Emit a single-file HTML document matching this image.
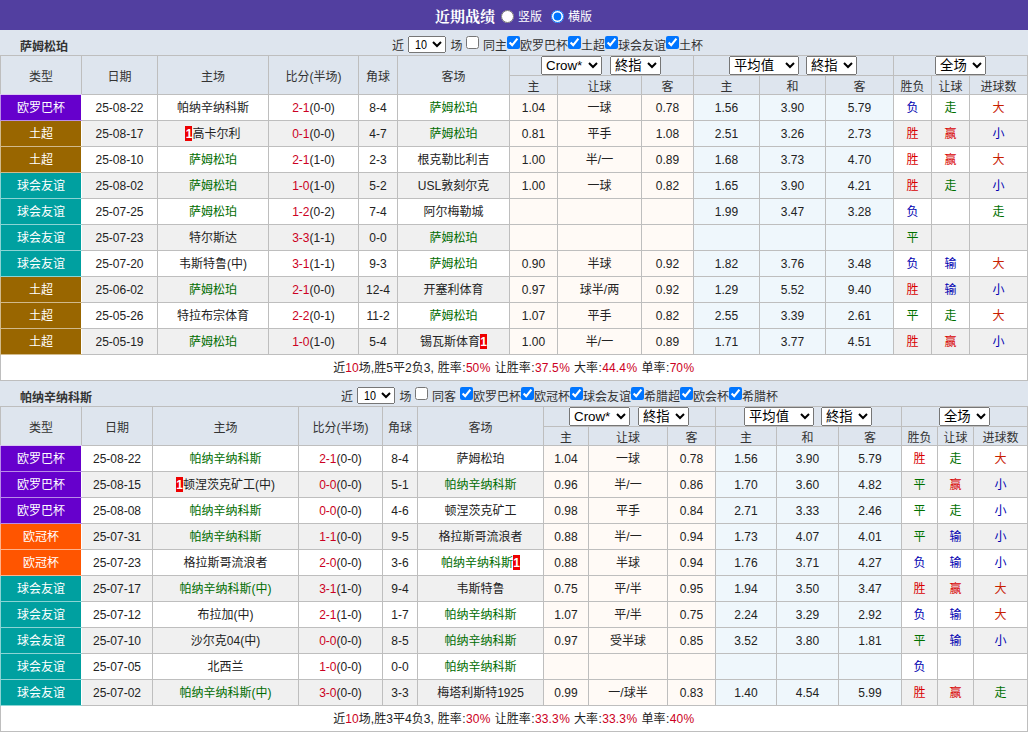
<!DOCTYPE html><html lang="zh-CN"><head><meta charset="utf-8"><title>近期战绩</title><style>*{box-sizing:border-box}
html,body{margin:0;padding:0}
body{width:1028px;height:732px;overflow:hidden;background:#fff;font:12px/1.2 "Liberation Sans","Noto Sans CJK SC",sans-serif;color:#222;position:relative}
.title{height:30px;background:#523fa0;color:#fff;position:relative}
.title .tt{position:absolute;left:435px;top:7px;font:bold 15px/20px "Liberation Serif","Noto Serif CJK SC",serif}
.title input{position:absolute;margin:0;width:13px;height:13px;top:10px}
.title .r1{left:501px}.title .r2{left:551px}
.title .rl{position:absolute;top:9px;line-height:16px}
.title .r1+.rl{left:518px}.title .r2+.rl{left:568px}
.bar{height:25px;background:#dee5ee;position:relative}
.bar.b2{height:25px}
.team{position:absolute;left:20px;top:9px;font:bold 12px/16px "Liberation Sans","Noto Sans CJK SC",sans-serif;color:#333}
.flt{position:absolute;left:0;top:0;color:#333}
.flt .ft{position:absolute;top:9px;line-height:14px;white-space:nowrap}
.flt input{position:absolute;top:6px;margin:0;width:13px;height:13px}
.flt select.n{position:absolute;top:6px;width:38px;height:17px;font:13px "Liberation Serif",serif;padding:0 0 2px 0;margin:0}
.flt .n10{position:absolute;top:8px;font:12.5px/14px "Liberation Sans",sans-serif;color:#000;transform:scaleX(.86);transform-origin:0 0;pointer-events:none}
table.t{border-collapse:collapse;table-layout:fixed;width:1028px}
table.t td,table.t th{border:1px solid #bebebe;padding:0;line-height:14px;text-align:center;font-weight:normal;overflow:hidden;white-space:nowrap}
tr.h1 th,tr.h2 th{background:#dee5ee;color:#333}
tr.h1{height:20px}tr.h2{height:19px}
tr.h2 th{padding-top:4px}
tr.h1 th[rowspan]{padding-top:3px}
tr.even td,tr.odd td,tr.sum td{padding-top:1px}
tr.h1 th:first-child{border-bottom-color:#dcc6f3}
tr.even,tr.odd,tr.sum{height:26px}
tr.odd td{background:#f0f0f0}
tr td.hd{background:#fffaf6 !important}
tr td.od{background:#eff7fc !important}
table.t td.tp{color:#fff}
td.me{color:#006c00}
.red{color:#cc0022}
tr.sum i{font-style:normal;display:inline-block;text-align:center}
i.pc{width:11.7px}i.dt{width:3.6px}i.cl{width:4.25px}i.sp{width:3.75px}i.cm{width:3.6px}
.rc{background:#ee0000;color:#fff;font-weight:bold;display:inline-block;width:7px;text-align:center;line-height:14px;box-shadow:0 -1px 0 #ee0000}
select.s{height:19px;padding:0;margin:0;font:13.333px "Liberation Sans","Noto Sans CJK SC",sans-serif;vertical-align:top}
table.t th.sc{font-size:0;line-height:0;text-align:left}
i.g7{display:inline-block;width:7px}i.g8{display:inline-block;width:8px}
tr.sum td{background:#fff}
</style></head><body><div class="title"><span class="tt">近期战绩</span><input type="radio" name="v" class="r1"><span class="rl">竖版</span><input type="radio" name="v" class="r2" checked><span class="rl">横版</span></div><div class="bar b1"><span class="team">萨姆松珀</span><div class="flt"><span class="ft" style="left:392px">近</span><select class="n" style="left:408px"><option></option></select><span class="n10" style="left:414.5px">10</span><span class="ft" style="left:450.5px">场</span><input type="checkbox" style="left:466px"><span class="ft" style="left:483px">同主</span><input type="checkbox" style="left:507px" checked><span class="ft" style="left:520px">欧罗巴杯</span><input type="checkbox" style="left:568px" checked><span class="ft" style="left:581px">土超</span><input type="checkbox" style="left:605px" checked><span class="ft" style="left:618px">球会友谊</span><input type="checkbox" style="left:666px" checked><span class="ft" style="left:679px">土杯</span></div></div><table class="t"><col style="width:81px"><col style="width:76px"><col style="width:111px"><col style="width:90px"><col style="width:39px"><col style="width:112px"><col style="width:48px"><col style="width:84px"><col style="width:52px"><col style="width:66px"><col style="width:66px"><col style="width:68px"><col style="width:38px"><col style="width:38px"><col style="width:58px"><tr class="h1"><th rowspan="2">类型</th><th rowspan="2">日期</th><th rowspan="2">主场</th><th rowspan="2">比分(半场)</th><th rowspan="2">角球</th><th rowspan="2">客场</th><th colspan="3" class="sc" style="padding-left:31px"><select class="s " style="width:61px"><option>Crow*</option></select><i class="g8"></i><select class="s " style="width:51px"><option>終指</option></select></th><th colspan="3" class="sc" style="padding-left:35px"><select class="s " style="width:70px"><option>平均值</option></select><i class="g7"></i><select class="s " style="width:51px"><option>終指</option></select></th><th colspan="3" class="sc" style="padding-left:41px"><select class="s " style="width:51px"><option>全场</option></select></th></tr><tr class="h2"><th>主</th><th>让球</th><th>客</th><th>主</th><th>和</th><th>客</th><th>胜负</th><th>让球</th><th>进球数</th></tr><tr class="even"><td class="tp" style="background:#6600cc;border-color:#ba8ce8 #fff #ba8ce8 #ba8ce8">欧罗巴杯</td><td>25-08-22</td><td class="">帕纳辛纳科斯</td><td><span class="red">2-1</span>(0-0)</td><td>8-4</td><td class="me">萨姆松珀</td><td class="hd">1.04</td><td class="hd">一球</td><td class="hd">0.78</td><td class="od">1.56</td><td class="od">3.90</td><td class="od">5.79</td><td style="color:#0000b0">负</td><td style="color:#007000">走</td><td style="color:#c82000">大</td></tr><tr class="odd"><td class="tp" style="background:#996600;border-color:#d1ba8c #fff #d1ba8c #d1ba8c">土超</td><td>25-08-17</td><td class=""><span class="rc">1</span>高卡尔利</td><td><span class="red">0-1</span>(0-0)</td><td>4-7</td><td class="me">萨姆松珀</td><td class="hd">0.81</td><td class="hd">平手</td><td class="hd">1.08</td><td class="od">2.51</td><td class="od">3.26</td><td class="od">2.73</td><td style="color:#d80000">胜</td><td style="color:#d80000">赢</td><td style="color:#0000b0">小</td></tr><tr class="even"><td class="tp" style="background:#996600;border-color:#d1ba8c #fff #d1ba8c #d1ba8c">土超</td><td>25-08-10</td><td class="me">萨姆松珀</td><td><span class="red">2-1</span>(1-0)</td><td>2-3</td><td class="">根克勒比利吉</td><td class="hd">1.00</td><td class="hd">半/一</td><td class="hd">0.89</td><td class="od">1.68</td><td class="od">3.73</td><td class="od">4.70</td><td style="color:#d80000">胜</td><td style="color:#d80000">赢</td><td style="color:#c82000">大</td></tr><tr class="odd"><td class="tp" style="background:#00a0a0;border-color:#8cd4d4 #fff #8cd4d4 #8cd4d4">球会友谊</td><td>25-08-02</td><td class="me">萨姆松珀</td><td><span class="red">1-0</span>(1-0)</td><td>5-2</td><td class="">USL敦刻尔克</td><td class="hd">1.00</td><td class="hd">一球</td><td class="hd">0.82</td><td class="od">1.65</td><td class="od">3.90</td><td class="od">4.21</td><td style="color:#d80000">胜</td><td style="color:#007000">走</td><td style="color:#0000b0">小</td></tr><tr class="even"><td class="tp" style="background:#00a0a0;border-color:#8cd4d4 #fff #8cd4d4 #8cd4d4">球会友谊</td><td>25-07-25</td><td class="me">萨姆松珀</td><td><span class="red">1-2</span>(0-2)</td><td>7-4</td><td class="">阿尔梅勒城</td><td class="hd"></td><td class="hd"></td><td class="hd"></td><td class="od">1.99</td><td class="od">3.47</td><td class="od">3.28</td><td style="color:#0000b0">负</td><td style="color:#000"></td><td style="color:#007000">走</td></tr><tr class="odd"><td class="tp" style="background:#00a0a0;border-color:#8cd4d4 #fff #8cd4d4 #8cd4d4">球会友谊</td><td>25-07-23</td><td class="">特尔斯达</td><td><span class="red">3-3</span>(1-1)</td><td>0-0</td><td class="me">萨姆松珀</td><td class="hd"></td><td class="hd"></td><td class="hd"></td><td class="od"></td><td class="od"></td><td class="od"></td><td style="color:#007000">平</td><td style="color:#000"></td><td style="color:#000"></td></tr><tr class="even"><td class="tp" style="background:#00a0a0;border-color:#8cd4d4 #fff #8cd4d4 #8cd4d4">球会友谊</td><td>25-07-20</td><td class="">韦斯特鲁(中)</td><td><span class="red">3-1</span>(1-1)</td><td>9-3</td><td class="me">萨姆松珀</td><td class="hd">0.90</td><td class="hd">半球</td><td class="hd">0.92</td><td class="od">1.82</td><td class="od">3.76</td><td class="od">3.48</td><td style="color:#0000b0">负</td><td style="color:#0000b0">输</td><td style="color:#c82000">大</td></tr><tr class="odd"><td class="tp" style="background:#996600;border-color:#d1ba8c #fff #d1ba8c #d1ba8c">土超</td><td>25-06-02</td><td class="me">萨姆松珀</td><td><span class="red">2-1</span>(0-0)</td><td>12-4</td><td class="">开塞利体育</td><td class="hd">0.97</td><td class="hd">球半/两</td><td class="hd">0.92</td><td class="od">1.29</td><td class="od">5.52</td><td class="od">9.40</td><td style="color:#d80000">胜</td><td style="color:#0000b0">输</td><td style="color:#0000b0">小</td></tr><tr class="even"><td class="tp" style="background:#996600;border-color:#d1ba8c #fff #d1ba8c #d1ba8c">土超</td><td>25-05-26</td><td class="">特拉布宗体育</td><td><span class="red">2-2</span>(0-1)</td><td>11-2</td><td class="me">萨姆松珀</td><td class="hd">1.07</td><td class="hd">平手</td><td class="hd">0.82</td><td class="od">2.55</td><td class="od">3.39</td><td class="od">2.61</td><td style="color:#007000">平</td><td style="color:#007000">走</td><td style="color:#c82000">大</td></tr><tr class="odd"><td class="tp" style="background:#996600;border-color:#d1ba8c #fff #d1ba8c #d1ba8c">土超</td><td>25-05-19</td><td class="me">萨姆松珀</td><td><span class="red">1-0</span>(1-0)</td><td>5-4</td><td class="">锡瓦斯体育<span class="rc">1</span></td><td class="hd">1.00</td><td class="hd">半/一</td><td class="hd">0.89</td><td class="od">1.71</td><td class="od">3.77</td><td class="od">4.51</td><td style="color:#d80000">胜</td><td style="color:#d80000">赢</td><td style="color:#0000b0">小</td></tr><tr class="sum"><td colspan="15">近<span class="red">10</span>场<i class="cm">,</i>胜5平2负3<i class="cm">,</i><i class="sp"> </i>胜率<i class="cl">:</i><span class="red">50<i class="pc">%</i></span><i class="sp"> </i>让胜率<i class="cl">:</i><span class="red">37<i class="dt">.</i>5<i class="pc">%</i></span><i class="sp"> </i>大率<i class="cl">:</i><span class="red">44<i class="dt">.</i>4<i class="pc">%</i></span><i class="sp"> </i>单率<i class="cl">:</i><span class="red">70<i class="pc">%</i></span></td></tr></table><div class="bar b2"><span class="team">帕纳辛纳科斯</span><div class="flt"><span class="ft" style="left:341px">近</span><select class="n" style="left:357px"><option></option></select><span class="n10" style="left:363.5px">10</span><span class="ft" style="left:399.5px">场</span><input type="checkbox" style="left:415px"><span class="ft" style="left:432px">同客</span><input type="checkbox" style="left:460px" checked><span class="ft" style="left:473px">欧罗巴杯</span><input type="checkbox" style="left:521px" checked><span class="ft" style="left:534px">欧冠杯</span><input type="checkbox" style="left:570px" checked><span class="ft" style="left:583px">球会友谊</span><input type="checkbox" style="left:631px" checked><span class="ft" style="left:644px">希腊超</span><input type="checkbox" style="left:680px" checked><span class="ft" style="left:693px">欧会杯</span><input type="checkbox" style="left:729px" checked><span class="ft" style="left:742px">希腊杯</span></div></div><table class="t"><col style="width:81px"><col style="width:71px"><col style="width:146px"><col style="width:84px"><col style="width:35px"><col style="width:126px"><col style="width:45px"><col style="width:79px"><col style="width:48px"><col style="width:61px"><col style="width:62px"><col style="width:63px"><col style="width:36px"><col style="width:36px"><col style="width:54px"><tr class="h1"><th rowspan="2">类型</th><th rowspan="2">日期</th><th rowspan="2">主场</th><th rowspan="2">比分(半场)</th><th rowspan="2">角球</th><th rowspan="2">客场</th><th colspan="3" class="sc" style="padding-left:25px"><select class="s " style="width:61px"><option>Crow*</option></select><i class="g8"></i><select class="s " style="width:51px"><option>終指</option></select></th><th colspan="3" class="sc" style="padding-left:28px"><select class="s " style="width:70px"><option>平均值</option></select><i class="g7"></i><select class="s " style="width:51px"><option>終指</option></select></th><th colspan="3" class="sc" style="padding-left:37px"><select class="s " style="width:51px"><option>全场</option></select></th></tr><tr class="h2"><th>主</th><th>让球</th><th>客</th><th>主</th><th>和</th><th>客</th><th>胜负</th><th>让球</th><th>进球数</th></tr><tr class="even"><td class="tp" style="background:#6600cc;border-color:#ba8ce8 #fff #ba8ce8 #ba8ce8">欧罗巴杯</td><td>25-08-22</td><td class="me">帕纳辛纳科斯</td><td><span class="red">2-1</span>(0-0)</td><td>8-4</td><td class="">萨姆松珀</td><td class="hd">1.04</td><td class="hd">一球</td><td class="hd">0.78</td><td class="od">1.56</td><td class="od">3.90</td><td class="od">5.79</td><td style="color:#d80000">胜</td><td style="color:#007000">走</td><td style="color:#c82000">大</td></tr><tr class="odd"><td class="tp" style="background:#6600cc;border-color:#ba8ce8 #fff #ba8ce8 #ba8ce8">欧罗巴杯</td><td>25-08-15</td><td class=""><span class="rc">1</span>顿涅茨克矿工(中)</td><td><span class="red">0-0</span>(0-0)</td><td>5-1</td><td class="me">帕纳辛纳科斯</td><td class="hd">0.96</td><td class="hd">半/一</td><td class="hd">0.86</td><td class="od">1.70</td><td class="od">3.60</td><td class="od">4.82</td><td style="color:#007000">平</td><td style="color:#d80000">赢</td><td style="color:#0000b0">小</td></tr><tr class="even"><td class="tp" style="background:#6600cc;border-color:#ba8ce8 #fff #ba8ce8 #ba8ce8">欧罗巴杯</td><td>25-08-08</td><td class="me">帕纳辛纳科斯</td><td><span class="red">0-0</span>(0-0)</td><td>4-6</td><td class="">顿涅茨克矿工</td><td class="hd">0.98</td><td class="hd">平手</td><td class="hd">0.84</td><td class="od">2.71</td><td class="od">3.33</td><td class="od">2.46</td><td style="color:#007000">平</td><td style="color:#007000">走</td><td style="color:#0000b0">小</td></tr><tr class="odd"><td class="tp" style="background:#ff5500;border-color:#ffb28c #fff #ffb28c #ffb28c">欧冠杯</td><td>25-07-31</td><td class="me">帕纳辛纳科斯</td><td><span class="red">1-1</span>(0-0)</td><td>9-5</td><td class="">格拉斯哥流浪者</td><td class="hd">0.88</td><td class="hd">半/一</td><td class="hd">0.94</td><td class="od">1.73</td><td class="od">4.07</td><td class="od">4.01</td><td style="color:#007000">平</td><td style="color:#0000b0">输</td><td style="color:#0000b0">小</td></tr><tr class="even"><td class="tp" style="background:#ff5500;border-color:#ffb28c #fff #ffb28c #ffb28c">欧冠杯</td><td>25-07-23</td><td class="">格拉斯哥流浪者</td><td><span class="red">2-0</span>(0-0)</td><td>3-6</td><td class="me">帕纳辛纳科斯<span class="rc">1</span></td><td class="hd">0.88</td><td class="hd">半球</td><td class="hd">0.94</td><td class="od">1.76</td><td class="od">3.71</td><td class="od">4.27</td><td style="color:#0000b0">负</td><td style="color:#0000b0">输</td><td style="color:#0000b0">小</td></tr><tr class="odd"><td class="tp" style="background:#00a0a0;border-color:#8cd4d4 #fff #8cd4d4 #8cd4d4">球会友谊</td><td>25-07-17</td><td class="me">帕纳辛纳科斯(中)</td><td><span class="red">3-1</span>(1-0)</td><td>9-4</td><td class="">韦斯特鲁</td><td class="hd">0.75</td><td class="hd">平/半</td><td class="hd">0.95</td><td class="od">1.94</td><td class="od">3.50</td><td class="od">3.47</td><td style="color:#d80000">胜</td><td style="color:#d80000">赢</td><td style="color:#c82000">大</td></tr><tr class="even"><td class="tp" style="background:#00a0a0;border-color:#8cd4d4 #fff #8cd4d4 #8cd4d4">球会友谊</td><td>25-07-12</td><td class="">布拉加(中)</td><td><span class="red">2-1</span>(1-0)</td><td>1-7</td><td class="me">帕纳辛纳科斯</td><td class="hd">1.07</td><td class="hd">平/半</td><td class="hd">0.75</td><td class="od">2.24</td><td class="od">3.29</td><td class="od">2.92</td><td style="color:#0000b0">负</td><td style="color:#0000b0">输</td><td style="color:#c82000">大</td></tr><tr class="odd"><td class="tp" style="background:#00a0a0;border-color:#8cd4d4 #fff #8cd4d4 #8cd4d4">球会友谊</td><td>25-07-10</td><td class="">沙尔克04(中)</td><td><span class="red">0-0</span>(0-0)</td><td>8-5</td><td class="me">帕纳辛纳科斯</td><td class="hd">0.97</td><td class="hd">受半球</td><td class="hd">0.85</td><td class="od">3.52</td><td class="od">3.80</td><td class="od">1.81</td><td style="color:#007000">平</td><td style="color:#0000b0">输</td><td style="color:#0000b0">小</td></tr><tr class="even"><td class="tp" style="background:#00a0a0;border-color:#8cd4d4 #fff #8cd4d4 #8cd4d4">球会友谊</td><td>25-07-05</td><td class="">北西兰</td><td><span class="red">1-0</span>(0-0)</td><td>0-0</td><td class="me">帕纳辛纳科斯</td><td class="hd"></td><td class="hd"></td><td class="hd"></td><td class="od"></td><td class="od"></td><td class="od"></td><td style="color:#0000b0">负</td><td style="color:#000"></td><td style="color:#000"></td></tr><tr class="odd"><td class="tp" style="background:#00a0a0;border-color:#8cd4d4 #fff #8cd4d4 #8cd4d4">球会友谊</td><td>25-07-02</td><td class="me">帕纳辛纳科斯(中)</td><td><span class="red">3-0</span>(0-0)</td><td>3-3</td><td class="">梅塔利斯特1925</td><td class="hd">0.99</td><td class="hd">一/球半</td><td class="hd">0.83</td><td class="od">1.40</td><td class="od">4.54</td><td class="od">5.99</td><td style="color:#d80000">胜</td><td style="color:#d80000">赢</td><td style="color:#007000">走</td></tr><tr class="sum"><td colspan="15">近<span class="red">10</span>场<i class="cm">,</i>胜3平4负3<i class="cm">,</i><i class="sp"> </i>胜率<i class="cl">:</i><span class="red">30<i class="pc">%</i></span><i class="sp"> </i>让胜率<i class="cl">:</i><span class="red">33<i class="dt">.</i>3<i class="pc">%</i></span><i class="sp"> </i>大率<i class="cl">:</i><span class="red">33<i class="dt">.</i>3<i class="pc">%</i></span><i class="sp"> </i>单率<i class="cl">:</i><span class="red">40<i class="pc">%</i></span></td></tr></table></body></html>
